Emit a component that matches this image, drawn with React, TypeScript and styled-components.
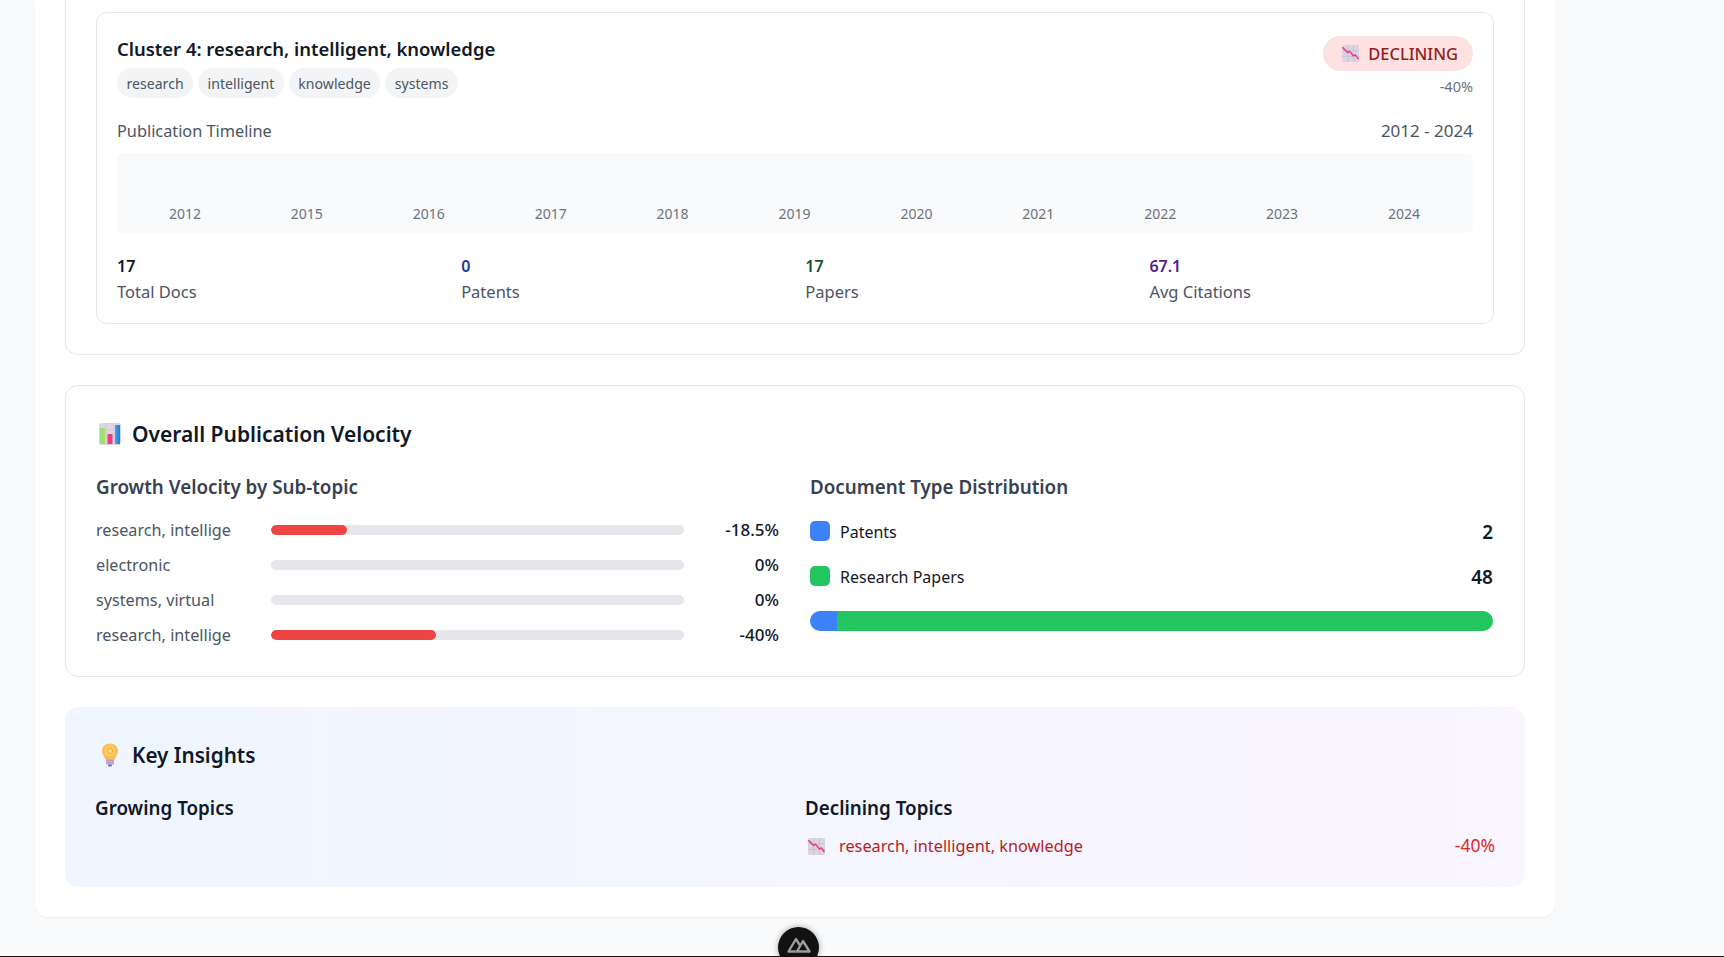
import styled, { createGlobalStyle } from "styled-components";

const GlobalStyle = createGlobalStyle`
  html, body {
    margin: 0;
    padding: 0;
    background: #f9fafb;
    font-family: "Noto Sans", "Open Sans", "Liberation Sans", sans-serif;
    color: #111827;
  }
  * { box-sizing: border-box; }
`;

const years = [2012, 2015, 2016, 2017, 2018, 2019, 2020, 2021, 2022, 2023, 2024];
const keywords = ["research", "intelligent", "knowledge", "systems"];
const stats = [
  { value: "17", label: "Total Docs", color: "#111827" },
  { value: "0", label: "Patents", color: "#1e3a8a" },
  { value: "17", label: "Papers", color: "#14532d" },
  { value: "67.1", label: "Avg Citations", color: "#581c87" },
];
const velocity = [
  { label: "research, intellige", pct: 18.5, value: "-18.5%" },
  { label: "electronic", pct: 0, value: "0%" },
  { label: "systems, virtual", pct: 0, value: "0%" },
  { label: "research, intellige", pct: 40, value: "-40%" },
];

function DecliningEmoji({ size }: { size: number }) {
  return (
    <svg width={size} height={size} viewBox="0 0 18 18" style={{ flexShrink: 0 }}>
      <rect width="18" height="18" rx="1.5" fill="#ddd3e6" />
      <path d="M0 6h18M0 12h18M6 0v18M12 0v18" stroke="#c4b8d4" strokeWidth="0.7" />
      <path d="M0.5 2.5 L6 8 L8 6.5 L12 11.5 L14 10.5 L17.5 15" fill="none" stroke="#e8396e" strokeWidth="1.5" />
    </svg>
  );
}

function BarChartEmoji() {
  return (
    <svg width="22" height="22" viewBox="0 0 22 22" style={{ flexShrink: 0 }}>
      <defs>
        <linearGradient id="barGreen" x1="0" x2="1" y1="0" y2="0">
          <stop offset="0" stopColor="#8fe27c" />
          <stop offset="1" stopColor="#b5dd62" />
        </linearGradient>
        <linearGradient id="barBlue" x1="0" x2="1" y1="0" y2="0">
          <stop offset="0" stopColor="#43a5f0" />
          <stop offset="1" stopColor="#1f78d8" />
        </linearGradient>
      </defs>
      <rect width="22" height="22" rx="2" fill="#dcd7e3" />
      <path d="M0 7h22M0 14h22M7 0v22M15 0v22" stroke="#cbc5d5" strokeWidth="0.7" />
      <rect x="1" y="5" width="5" height="16" fill="url(#barGreen)" />
      <rect x="8.5" y="11" width="5" height="10" fill="#ec3d80" />
      <rect x="16" y="2" width="5" height="19" fill="url(#barBlue)" />
    </svg>
  );
}

function BulbEmoji() {
  return (
    <svg width="18" height="24" viewBox="0 0 18 24" style={{ flexShrink: 0 }}>
      <defs>
        <radialGradient id="bulbGlow" cx="0.5" cy="0.45" r="0.6">
          <stop offset="0" stopColor="#ffe38a" />
          <stop offset="1" stopColor="#fbb03b" />
        </radialGradient>
      </defs>
      <path d="M9 0.5C4.2 0.5 1 4 1 8c0 3.4 2.6 5 3.5 8.5h9C14.4 13 17 11.4 17 8c0-4-3.2-7.500-8-7.500z" fill="url(#bulbGlow)" />
      <circle cx="9" cy="8" r="2.6" fill="none" stroke="#f09a2a" strokeWidth="0.8" />
      <rect x="5" y="16.500" width="8" height="5" rx="1" fill="#a690c4" />
      <path d="M5 18.200h8M5 20h8" stroke="#d8cce6" strokeWidth="0.7" />
      <rect x="7" y="21.500" width="4" height="2" rx="1" fill="#7d68a0" />
    </svg>
  );
}

export default function App() {
  return (
    <Viewport>
      <GlobalStyle />
      <Panel>
        <ClusterSection>
          <ClusterCard>
            <ClusterHeader>
              <div>
                <ClusterTitle>Cluster 4: research, intelligent, knowledge</ClusterTitle>
                <Chips>
                  {keywords.map((k) => (
                    <Chip key={k}>{k}</Chip>
                  ))}
                </Chips>
              </div>
              <TrendBox>
                <TrendBadge>
                  <DecliningEmoji size={17} />
                  DECLINING
                </TrendBadge>
                <TrendValue>-40%</TrendValue>
              </TrendBox>
            </ClusterHeader>
            <TimelineHeader>
              <TimelineTitle>Publication Timeline</TimelineTitle>
              <span>2012 - 2024</span>
            </TimelineHeader>
            <Timeline>
              {years.map((y) => (
                <YearLabel key={y}>{y}</YearLabel>
              ))}
            </Timeline>
            <StatGrid>
              {stats.map((s) => (
                <div key={s.label}>
                  <StatValue $color={s.color}>{s.value}</StatValue>
                  <StatLabel>{s.label}</StatLabel>
                </div>
              ))}
            </StatGrid>
          </ClusterCard>
        </ClusterSection>

        <VelocityCard>
          <SectionTitle>
            <BarChartEmoji />
            Overall Publication Velocity
          </SectionTitle>
          <TwoColumns>
            <div>
              <ColumnHeading>Growth Velocity by Sub-topic</ColumnHeading>
              <VelocityList>
                {velocity.map((row, i) => (
                  <VelocityRow key={i}>
                    <VelocityLabel>{row.label}</VelocityLabel>
                    <Track>
                      <TrackFill style={{ width: `${row.pct}%` }} />
                    </Track>
                    <VelocityValue>{row.value}</VelocityValue>
                  </VelocityRow>
                ))}
              </VelocityList>
            </div>
            <div>
              <ColumnHeading>Document Type Distribution</ColumnHeading>
              <LegendList>
                <LegendRow>
                  <Swatch $color="#3b82f6" />
                  <LegendLabel>Patents</LegendLabel>
                  <LegendCount>2</LegendCount>
                </LegendRow>
                <LegendRow>
                  <Swatch $color="#22c55e" />
                  <LegendLabel>Research Papers</LegendLabel>
                  <LegendCount>48</LegendCount>
                </LegendRow>
              </LegendList>
              <StackBar>
                <StackPart $color="#3b82f6" style={{ width: "4%" }} />
                <StackPart $color="#22c55e" style={{ width: "96%" }} />
              </StackBar>
            </div>
          </TwoColumns>
        </VelocityCard>

        <InsightsCard>
          <InsightsTitle>
            <BulbEmoji />
            Key Insights
          </InsightsTitle>
          <InsightColumns>
            <InsightHeading>Growing Topics</InsightHeading>
            <div>
              <InsightHeading>Declining Topics</InsightHeading>
              <InsightRow>
                <InsightName>
                  <DecliningEmoji size={17} />
                  research, intelligent, knowledge
                </InsightName>
                <InsightValue>-40%</InsightValue>
              </InsightRow>
            </div>
          </InsightColumns>
        </InsightsCard>
      </Panel>

      <DevLine />
      <DevBadge>
        <svg width="24" height="16" viewBox="0 0 24 16" fill="none" stroke="#9c9c9c" strokeWidth="2.4" strokeLinejoin="round">
          <path d="M8.500 14.500H1.500L9 2l4 6.500" />
          <path d="M8.500 14.500h14L16 4 10 14.500" />
        </svg>
      </DevBadge>
    </Viewport>
  );
}

const Viewport = styled.div`
  position: relative;
  height: 957px;
  overflow: hidden;
  padding-left: 35px;
`;

const Panel = styled.main`
  width: 1520px;
  height: 917px;
  padding: 0 30px;
  background: #fff;
  box-shadow: 0 1px 2px rgba(0, 0, 0, 0.06);
  border-radius: 0 0 13px 13px;
`;

const ClusterSection = styled.section`
  padding: 12px 30px 30px;
  background: #fff;
  border: 1px solid #e5e7eb;
  border-top: none;
  border-radius: 0 0 13px 13px;
`;

const ClusterCard = styled.div`
  height: 312px;
  padding: 20px 20px 18px;
  border: 1px solid #e5e7eb;
  border-radius: 11px;
`;

const ClusterHeader = styled.div`
  display: flex;
  justify-content: space-between;
  align-items: flex-start;
`;

const ClusterTitle = styled.h3`
  margin: 0 0 3px;
  font-size: 18.450px;
  font-weight: 600;
  line-height: 32px;
  color: #111827;
`;

const Chips = styled.div`
  display: flex;
  gap: 5px;
`;

const Chip = styled.span`
  height: 30px;
  padding: 0 9.500px;
  border-radius: 15px;
  background: #f3f4f6;
  color: #4b5563;
  font-size: 14.100px;
  line-height: 32px;
`;

const TrendBox = styled.div`
  display: flex;
  flex-direction: column;
  align-items: flex-end;
  margin-top: 3px;
`;

const TrendBadge = styled.div`
  display: flex;
  align-items: center;
  gap: 9px;
  height: 35px;
  padding: 0 15px 0 19px;
  border-radius: 18px;
  background: #fee2e2;
  color: #991b1b;
  font-size: 16.500px;
  font-weight: 500;
`;

const TrendValue = styled.div`
  margin-top: 4px;
  color: #6b7280;
  font-size: 14.500px;
  line-height: 22px;
`;

const TimelineHeader = styled.div`
  display: flex;
  justify-content: space-between;
  margin-top: 20px;
  color: #4b5563;
  font-size: 17px;
  line-height: 26px;
`;

const TimelineTitle = styled.span`
  font-size: 16.300px;
`;

const Timeline = styled.div`
  display: grid;
  grid-template-columns: repeat(11, 1fr);
  align-items: end;
  height: 80px;
  margin-top: 9px;
  padding: 0 8px 9px 7px;
  background: #f9fafb;
  border-radius: 6px;
`;

const YearLabel = styled.span`
  text-align: center;
  color: #6b7280;
  font-size: 14px;
  line-height: 20px;
`;

const StatGrid = styled.div`
  display: grid;
  grid-template-columns: repeat(4, 1fr);
  gap: 20.500px;
  margin-top: 20px;
`;

const StatValue = styled.div<{ $color: string }>`
  height: 26px;
  color: ${(p) => p.$color};
  font-size: 16px;
  font-weight: 600;
  line-height: 27px;
`;

const StatLabel = styled.div`
  color: #4b5563;
  font-size: 16.500px;
  line-height: 26px;
`;

const VelocityCard = styled.section`
  height: 292px;
  margin-top: 30px;
  padding: 32px 31px 0 30px;
  background: #fff;
  border: 1px solid #e5e7eb;
  border-radius: 13px;
`;

const SectionTitle = styled.h2`
  display: flex;
  align-items: center;
  gap: 11px;
  margin: 0 0 24px 3px;
  font-size: 21px;
  font-weight: 600;
  line-height: 32px;
  color: #111827;
`;

const TwoColumns = styled.div`
  display: grid;
  grid-template-columns: 1fr 1fr;
  gap: 31px;
`;

const ColumnHeading = styled.h3`
  margin: 0;
  font-size: 18.800px;
  font-weight: 600;
  line-height: 26px;
  color: #374151;
`;

const VelocityList = styled.div`
  display: flex;
  flex-direction: column;
  gap: 10px;
  margin-top: 17px;
`;

const VelocityRow = styled.div`
  display: flex;
  align-items: center;
  height: 25px;
`;

const VelocityLabel = styled.span`
  width: 175px;
  flex-shrink: 0;
  color: #4b5563;
  font-size: 16.200px;
  white-space: nowrap;
`;

const Track = styled.div`
  flex: 1;
  height: 10px;
  background: #e5e7eb;
  border-radius: 5px;
  overflow: hidden;
`;

const TrackFill = styled.div`
  height: 100%;
  background: #ef4444;
  border-radius: 5px;
`;

const VelocityValue = styled.span`
  width: 95px;
  flex-shrink: 0;
  text-align: right;
  color: #111827;
  font-size: 17px;
  font-weight: 500;
`;

const LegendList = styled.div`
  display: flex;
  flex-direction: column;
  gap: 19px;
  margin-top: 18px;
`;

const LegendRow = styled.div`
  display: flex;
  align-items: center;
  height: 26px;
`;

const Swatch = styled.span<{ $color: string }>`
  width: 20px;
  height: 20px;
  margin: 0 10px 1px 0;
  background: ${(p) => p.$color};
  border-radius: 5px;
`;

const LegendLabel = styled.span`
  flex: 1;
  padding-top: 2px;
  font-size: 16px;
  color: #111827;
`;

const LegendCount = styled.span`
  padding-top: 1px;
  font-size: 19px;
  font-weight: 600;
  color: #111827;
`;

const StackBar = styled.div`
  display: flex;
  height: 20px;
  margin-top: 22px;
  border-radius: 10px;
  overflow: hidden;
`;

const StackPart = styled.div<{ $color: string }>`
  background: ${(p) => p.$color};
`;

const InsightsCard = styled.section`
  height: 180px;
  margin-top: 30px;
  padding: 32px 30px 0;
  background: linear-gradient(to right, #eff6ff, #faf5ff);
  border-radius: 13px;
`;

const InsightsTitle = styled.h2`
  display: flex;
  align-items: center;
  gap: 13px;
  margin: 0 0 24px 6px;
  font-size: 20.700px;
  font-weight: 600;
  line-height: 32px;
  color: #111827;
`;

const InsightColumns = styled.div`
  display: grid;
  grid-template-columns: 1fr 1fr;
  gap: 20px;
`;

const InsightHeading = styled.h3`
  margin: 0;
  font-size: 18.800px;
  font-weight: 600;
  line-height: 26px;
  color: #111827;
`;

const InsightRow = styled.div`
  display: flex;
  justify-content: space-between;
  align-items: center;
  margin-top: 12px;
  font-size: 16.300px;
  line-height: 26px;
`;

const InsightName = styled.span`
  display: flex;
  align-items: center;
  gap: 14px;
  padding-left: 3px;
  color: #b91c1c;
`;

const InsightValue = styled.span`
  color: #dc2626;
  font-size: 17.500px;
  line-height: 24px;
  margin-bottom: 2px;
`;

const DevLine = styled.div`
  position: absolute;
  left: 0;
  right: 0;
  bottom: 0;
  height: 1px;
  background: #151515;
`;

const DevBadge = styled.div`
  position: absolute;
  left: 778px;
  top: 927px;
  display: flex;
  justify-content: center;
  padding-top: 10px;
  width: 41px;
  height: 41px;
  border-radius: 50%;
  background: #111;
  box-shadow: 0 0 6px rgba(0, 0, 0, 0.35);
`;
